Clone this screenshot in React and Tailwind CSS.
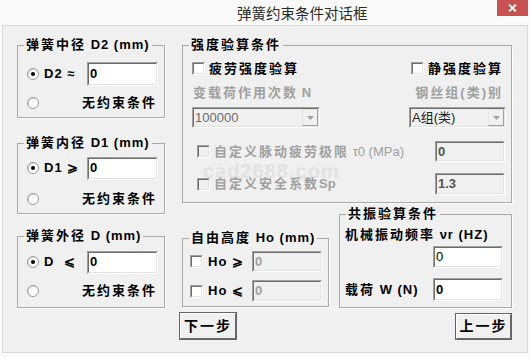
const ui = "font-['Liberation_Sans','Noto_Sans_CJK_SC',sans-serif]"

function Radio({ checked }) {
  return (
    <span className="w-[12px] h-[12px] rounded-full border border-[#9a9a9a] bg-white flex items-center justify-center shrink-0 shadow-[inset_1px_1px_0_#d8d8d8]">
      {checked && <span className="w-[4px] h-[4px] rounded-full bg-black" />}
    </span>
  )
}

function Check({ disabled }) {
  return (
    <span className="w-[13px] h-[13px] shrink-0 border border-t-[#a0a0a0] border-l-[#a0a0a0] border-r-white border-b-white">
      <span className={`block w-full h-full border border-t-[#6d6d6d] border-l-[#6d6d6d] border-r-[#e3e3e3] border-b-[#e3e3e3] ${disabled ? 'bg-[#f0f0f0]' : 'bg-white'}`} />
    </span>
  )
}

function Box({ value, disabled, dim, className = '' }) {
  return (
    <div className={`border border-t-[#a0a0a0] border-l-[#a0a0a0] border-r-white border-b-white ${className}`}>
      <div className={`h-full border border-t-[#6d6d6d] border-l-[#6d6d6d] border-r-[#e3e3e3] border-b-[#e3e3e3] flex items-center pl-[1px] text-[13px] tracking-normal ${disabled ? 'bg-[#f0f0f0]' : 'bg-white'} ${dim ? 'text-[#a0a0a0]' : disabled ? 'text-[#555]' : 'text-black'}`}>
        {value}
      </div>
    </div>
  )
}

function Combo({ value, className = '', textColor = 'text-[#6d6d6d]' }) {
  return (
    <div className={`border border-t-[#a0a0a0] border-l-[#a0a0a0] border-r-white border-b-white ${className}`}>
      <div className="h-full border border-t-[#6d6d6d] border-l-[#6d6d6d] border-r-[#e3e3e3] border-b-[#e3e3e3] bg-[#f0f0f0] flex items-center">
        <span className={`flex-1 pl-[1px] text-[13px] ${textColor}`}>{value}</span>
        <span className="w-[16px] h-full border border-t-[#e3e3e3] border-l-[#e3e3e3] border-r-[#a0a0a0] border-b-[#a0a0a0] flex items-center justify-center">
          <svg width="7" height="4" viewBox="0 0 7 4"><path d="M0 0h7L3.5 4z" fill="#a0a0a0" /></svg>
        </span>
      </div>
    </div>
  )
}

function Group({ title, className = '', children }) {
  return (
    <fieldset className={`border border-[#a9a9a9] shadow-[1px_1px_0_#fff] ${className}`}>
      <legend className="ml-[6px] px-[2px] leading-[16px] text-[13px] font-bold tracking-[2px] text-black">{title}</legend>
      {children}
    </fieldset>
  )
}

function Button({ label, className = '' }) {
  return (
    <div className={`border border-[#646464] ${className}`}>
      <div className="h-full border border-t-white border-l-white border-r-[#696969] border-b-[#696969] flex items-center justify-center text-[14px] font-bold tracking-[2px] text-black bg-[#f0f0f0]">
        {label}
      </div>
    </div>
  )
}

export default function App() {
  return (
    <div className={`w-[530px] h-[357px] bg-[#fafafa] overflow-hidden ${ui}`}>
      <div className="relative h-[25px] flex items-center pl-[237px]">
        <span className="text-[14.5px] text-[#2b2b2b] font-['Noto_Sans_CJK_SC',sans-serif]">弹簧约束条件对话框</span>
        <div className="absolute right-[2px] top-0 w-[31px] h-[16px] bg-[#c75050] flex items-center justify-center">
          <svg width="9" height="8" viewBox="0 0 9 8"><path d="M1 0.5l7 7M8 0.5l-7 7" stroke="#fff" strokeWidth="1.8" /></svg>
        </div>
      </div>

      <div className="ml-[2px] w-[526px] h-[328px] border border-[#dadada] bg-[#f0f0f0] flex items-start">
        {/* left column */}
        <div className="ml-[14px] w-[148px] flex flex-col">
          <Group title={<>弹簧中径<span className="tracking-[1px]"> D2 (mm)</span></>} className="mt-[11px] h-[81px]">
            <div className="mt-[9px] h-[24px] flex items-center pl-[9px] pr-[6px] text-[13px] font-bold">
              <Radio checked />
              <span className="ml-[5px] tracking-[1px]">D2 ≈</span>
              <Box value="0" className="ml-auto w-[71px] h-[24px]" />
            </div>
            <div className="mt-[6px] h-[22px] flex items-center pl-[9px] pr-[7px] text-[13px] font-bold tracking-[2px]">
              <Radio />
              <span className="ml-auto">无约束条件</span>
            </div>
          </Group>

          <Group title={<>弹簧内径<span className="tracking-[1px]"> D1 (mm)</span></>} className="mt-[17px] h-[79px]">
            <div className="mt-[5px] h-[24px] flex items-center pl-[9px] pr-[6px] text-[13px] font-bold">
              <Radio checked />
              <span className="ml-[5px] tracking-[1px]">D1 ⩾</span>
              <Box value="0" className="ml-auto w-[71px] h-[23px]" />
            </div>
            <div className="mt-[8px] h-[22px] flex items-center pl-[9px] pr-[7px] text-[13px] font-bold tracking-[2px]">
              <Radio />
              <span className="ml-auto">无约束条件</span>
            </div>
          </Group>

          <Group title={<>弹簧外径<span className="tracking-[1px]"> D (mm)</span></>} className="mt-[14px] h-[80px]">
            <div className="mt-[6px] h-[24px] flex items-center pl-[9px] pr-[6px] text-[13px] font-bold">
              <Radio checked />
              <span className="ml-[5px] tracking-[1px]">D&nbsp;&nbsp;⩽</span>
              <Box value="0" className="ml-auto w-[71px] h-[23px]" />
            </div>
            <div className="mt-[6px] h-[22px] flex items-center pl-[9px] pr-[7px] text-[13px] font-bold tracking-[2px]">
              <Radio />
              <span className="ml-auto">无约束条件</span>
            </div>
          </Group>
        </div>

        {/* right column */}
        <div className="ml-[17px] w-[330px] flex flex-col">
          <Group title="强度验算条件" className="relative mt-[11px] h-[166px]">
            <span className="absolute left-[20px] top-[108px] leading-none text-[20px] font-bold tracking-[1px] text-[#e2e2e2] pointer-events-none">cad2688.com</span>
            <div className="relative mt-[8px] h-[15px] flex items-center justify-between pl-[9px] pr-[8px] text-[13px] font-bold tracking-[2px]">
              <div className="flex items-center">
                <Check />
                <span className="ml-[4px]">疲劳强度验算</span>
              </div>
              <div className="flex items-center">
                <Check />
                <span className="ml-[4px]">静强度验算</span>
              </div>
            </div>
            <div className="relative mt-[9px] h-[16px] flex items-center justify-between pl-[10px] pr-[8px] text-[13px] font-bold tracking-[2px] text-[#a0a0a0]">
              <span>变载荷作用次数<span className="tracking-normal"> N</span></span>
              <span>钢丝组(类)别</span>
            </div>
            <div className="relative mt-[6px] h-[21px] flex justify-between pl-[9px] pr-[5px]">
              <Combo value="100000" className="w-[128px] h-[21px]" />
              <Combo value="A组(类)" textColor="text-[#222]" className="w-[97px] h-[21px]" />
            </div>
            <div className="relative mt-[13px] h-[21px] flex items-center pl-[14px] pr-[6px] text-[13px] font-bold tracking-[2px] text-[#a0a0a0]">
              <Check disabled />
              <span className="ml-[4px]">自定义脉动疲劳极限<span className="tracking-normal font-normal"> τ0 (MPa)</span></span>
              <Box value="0" disabled className="ml-auto w-[70px] h-[21px]" />
            </div>
            <div className="relative mt-[11px] h-[22px] flex items-center pl-[14px] pr-[6px] text-[13px] font-bold tracking-[2px] text-[#a0a0a0]">
              <Check disabled />
              <span className="ml-[4px]">自定义安全系数<span className="tracking-normal">Sp</span></span>
              <Box value="1.3" disabled className="ml-auto w-[70px] h-[22px]" />
            </div>
          </Group>

          <div className="flex items-start">
            <div className="w-[147px] flex flex-col">
              <Group title={<>自由高度<span className="tracking-[1px]"> Ho (mm)</span></>} className="mt-[27px] h-[77px]">
                <div className="mt-[5px] h-[21px] flex items-center pl-[7px] pr-[6px] text-[13px] font-bold">
                  <Check />
                  <span className="ml-[5px] tracking-[1px]">Ho ⩾</span>
                  <Box value="0" disabled dim className="ml-auto w-[70px] h-[21px]" />
                </div>
                <div className="mt-[8px] h-[22px] flex items-center pl-[7px] pr-[6px] text-[13px] font-bold">
                  <Check />
                  <span className="ml-[5px] tracking-[1px]">Ho ⩽</span>
                  <Box value="0" disabled dim className="ml-auto w-[70px] h-[22px]" />
                </div>
              </Group>
              <Button label="下一步" className="mt-[5px] -ml-[3px] w-[58px] h-[28px]" />
            </div>

            <div className="ml-[10px] w-[173px] flex flex-col">
              <Group title="共振验算条件" className="mt-[3px] h-[102px]">
                <div className="mt-[5px] h-[16px] flex items-center pl-[5px] text-[13px] font-bold tracking-[2px]">
                  机械振动频率<span className="tracking-[1px]">&nbsp;νr (HZ)</span>
                </div>
                <div className="mt-[3px] flex justify-end pr-[8px]">
                  <Box value="0" className="w-[70px] h-[22px]" />
                </div>
                <div className="mt-[10px] h-[23px] flex items-center pl-[5px] pr-[8px] text-[13px] font-bold tracking-[2px]">
                  <span>载荷<span className="tracking-[1px]"> W (N)</span></span>
                  <Box value="0" className="ml-auto w-[70px] h-[23px]" />
                </div>
              </Group>
              <Button label="上一步" className="self-end mt-[5px] w-[57px] h-[27px]" />
            </div>
          </div>
        </div>
      </div>
    </div>
  )
}
